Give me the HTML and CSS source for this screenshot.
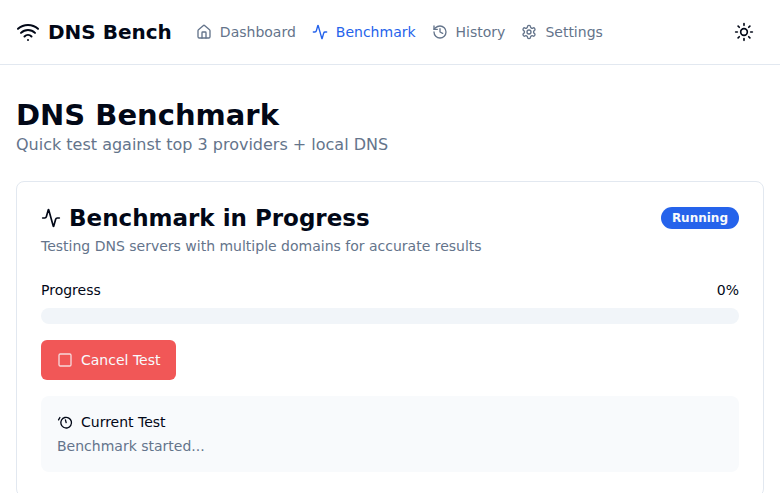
FILE: index.html
```html
<!DOCTYPE html>
<html lang="en">
<head>
<meta charset="utf-8">
<meta name="viewport" content="width=device-width, initial-scale=1">
<title>DNS Bench</title>
<link rel="stylesheet" href="styles.css">
</head>
<body>
<header class="topbar">
  <a class="brand" href="#">
    <svg class="icon icon-lg" viewBox="0 0 24 24" aria-hidden="true"><path d="M12 20h.01"/><path d="M2 8.82a15 15 0 0 1 20 0"/><path d="M5 12.859a10 10 0 0 1 14 0"/><path d="M8.5 16.429a5 5 0 0 1 7 0"/></svg>
    <span>DNS Bench</span>
  </a>
  <nav class="nav">
    <a class="nav-link" href="#">
      <svg class="icon" viewBox="0 0 24 24" aria-hidden="true"><path d="M15 21v-8a1 1 0 0 0-1-1h-4a1 1 0 0 0-1 1v8"/><path d="M3 10a2 2 0 0 1 .709-1.528l7-5.999a2 2 0 0 1 2.582 0l7 5.999A2 2 0 0 1 21 10v9a2 2 0 0 1-2 2H5a2 2 0 0 1-2-2z"/></svg>
      <span>Dashboard</span>
    </a>
    <a class="nav-link active" href="#" aria-current="page">
      <svg class="icon" viewBox="0 0 24 24" aria-hidden="true"><path d="M22 12h-2.48a2 2 0 0 0-1.93 1.46l-2.35 8.36a.25.25 0 0 1-.48 0L9.24 2.18a.25.25 0 0 0-.48 0l-2.35 8.36A2 2 0 0 1 4.49 12H2"/></svg>
      <span>Benchmark</span>
    </a>
    <a class="nav-link" href="#">
      <svg class="icon" viewBox="0 0 24 24" aria-hidden="true"><path d="M3 12a9 9 0 1 0 9-9 9.75 9.75 0 0 0-6.74 2.74L3 8"/><path d="M3 3v5h5"/><path d="M12 7v5l4 2"/></svg>
      <span>History</span>
    </a>
    <a class="nav-link" href="#">
      <svg class="icon" viewBox="0 0 24 24" aria-hidden="true"><path d="M12.22 2h-.44a2 2 0 0 0-2 2v.18a2 2 0 0 1-1 1.73l-.43.25a2 2 0 0 1-2 0l-.15-.08a2 2 0 0 0-2.73.73l-.22.38a2 2 0 0 0 .73 2.73l.15.1a2 2 0 0 1 1 1.72v.51a2 2 0 0 1-1 1.74l-.15.09a2 2 0 0 0-.73 2.73l.22.38a2 2 0 0 0 2.73.73l.15-.08a2 2 0 0 1 2 0l.43.25a2 2 0 0 1 1 1.73V20a2 2 0 0 0 2 2h.44a2 2 0 0 0 2-2v-.18a2 2 0 0 1 1-1.73l.43-.25a2 2 0 0 1 2 0l.15.08a2 2 0 0 0 2.73-.73l.22-.39a2 2 0 0 0-.73-2.73l-.15-.08a2 2 0 0 1-1-1.74v-.5a2 2 0 0 1 1-1.74l.15-.09a2 2 0 0 0 .73-2.73l-.22-.38a2 2 0 0 0-2.73-.73l-.15.08a2 2 0 0 1-2 0l-.43-.25a2 2 0 0 1-1-1.73V4a2 2 0 0 0-2-2z"/><circle cx="12" cy="12" r="3"/></svg>
      <span>Settings</span>
    </a>
  </nav>
  <button class="theme-toggle" type="button" aria-label="Toggle theme">
    <svg class="icon icon-md" viewBox="0 0 24 24" aria-hidden="true"><circle cx="12" cy="12" r="4"/><path d="M12 2v2"/><path d="M12 20v2"/><path d="m4.93 4.93 1.41 1.41"/><path d="m17.66 17.66 1.41 1.41"/><path d="M2 12h2"/><path d="M20 12h2"/><path d="m6.34 17.66-1.41 1.41"/><path d="m19.07 4.93-1.41 1.41"/></svg>
  </button>
</header>
<main class="page">
  <div class="intro">
    <h1>DNS Benchmark</h1>
    <p>Quick test against top 3 providers + local DNS</p>
  </div>
  <section class="card">
    <div class="card-header">
      <div class="card-title">
        <h2>
          <svg class="icon icon-md" viewBox="0 0 24 24" aria-hidden="true"><path d="M22 12h-2.48a2 2 0 0 0-1.93 1.46l-2.35 8.36a.25.25 0 0 1-.48 0L9.24 2.18a.25.25 0 0 0-.48 0l-2.35 8.36A2 2 0 0 1 4.49 12H2"/></svg>
          <span>Benchmark in Progress</span>
        </h2>
        <span class="badge">Running</span>
      </div>
      <p>Testing DNS servers with multiple domains for accurate results</p>
    </div>
    <div class="card-body">
      <div class="progress">
        <div class="progress-label"><span id="progress-name">Progress</span><span>0%</span></div>
        <div class="track" role="progressbar" aria-labelledby="progress-name" aria-valuemin="0" aria-valuemax="100" aria-valuenow="0"></div>
      </div>
      <button class="cancel" type="button">
        <svg class="icon" viewBox="0 0 24 24" aria-hidden="true"><rect width="18" height="18" x="3" y="3" rx="2"/></svg>
        <span>Cancel Test</span>
      </button>
      <div class="current">
        <h3>
          <svg class="icon" viewBox="0 0 24 24" aria-hidden="true"><g transform="rotate(-60 12 12)"><path d="M10 2h4"/><path d="M12 14l3-3"/><circle cx="12" cy="14" r="8"/></g></svg>
          <span>Current Test</span>
        </h3>
        <p>Benchmark started...</p>
      </div>
    </div>
  </section>
</main>
</body>
</html>
```
FILE: styles.css
```css
:root {
  --ink: #020817;
  --muted: #64748b;
  --line: #e2e8f0;
  --blue: #2563eb;
}

* {
  box-sizing: border-box;
}

body {
  margin: 0;
  background: #fff;
  color: var(--ink);
  font: 14px/20px "DejaVu Sans", sans-serif;
  overflow: hidden;
}

h1, h2, h3, p {
  margin: 0;
}

a {
  color: inherit;
  text-decoration: none;
}

button {
  border: 0;
  font: inherit;
  cursor: pointer;
}

.icon {
  width: 16px;
  height: 16px;
  flex: none;
  fill: none;
  stroke: currentColor;
  stroke-width: 2;
  stroke-linecap: round;
  stroke-linejoin: round;
  overflow: visible;
}

.icon-md {
  width: 20px;
  height: 20px;
}

.icon-lg {
  width: 24px;
  height: 24px;
}

.topbar {
  display: flex;
  align-items: center;
  gap: 24px;
  height: 65px;
  padding: 0 16px;
  border-bottom: 1px solid var(--line);
}

.brand {
  display: flex;
  align-items: center;
  gap: 8px;
  font-size: 20px;
  line-height: 28px;
  font-weight: 700;
}

.nav {
  display: flex;
  gap: 16px;
  color: var(--muted);
}

.nav-link {
  display: flex;
  align-items: center;
  gap: 8px;
}

.active {
  color: var(--blue);
}

.theme-toggle {
  display: flex;
  align-items: center;
  justify-content: center;
  width: 40px;
  height: 40px;
  margin-left: auto;
  padding: 0;
  background: none;
  color: inherit;
}

.page {
  display: grid;
  gap: 24px;
  padding: 32px 16px;
}

.intro h1 {
  font-size: 29px;
  line-height: 36px;
}

.intro p {
  color: var(--muted);
  font-size: 16px;
  line-height: 24px;
}

.card {
  border: 1px solid var(--line);
  border-radius: 8px;
}

.card-header {
  display: grid;
  gap: 6px;
  padding: 24px;
}

.card-header p,
.current p {
  color: var(--muted);
}

.card-title {
  display: flex;
  align-items: center;
  justify-content: space-between;
}

.card-title h2 {
  display: flex;
  align-items: center;
  gap: 8px;
  font-size: 23px;
  line-height: 24px;
}

.badge {
  padding: 3px 11px;
  border-radius: 11px;
  background: var(--blue);
  color: #f8fafc;
  font-size: 12px;
  line-height: 16px;
  font-weight: 700;
}

.card-body {
  display: grid;
  gap: 16px;
  padding: 0 24px 24px;
}

.progress {
  display: grid;
  gap: 8px;
}

.progress-label {
  display: flex;
  justify-content: space-between;
}

.track {
  height: 16px;
  border-radius: 8px;
  background: #f1f5f9;
}

.cancel {
  display: flex;
  align-items: center;
  justify-self: start;
  gap: 8px;
  height: 40px;
  padding: 0 16px;
  border-radius: 6px;
  background: #f15757;
  color: #f8fafc;
}

.cancel .icon {
  opacity: 0.8;
}

.current {
  display: grid;
  gap: 4px;
  padding: 16px;
  border-radius: 8px;
  background: #f8fafc;
}

.current h3 {
  display: flex;
  align-items: center;
  gap: 8px;
  font-size: 14px;
  font-weight: 400;
}
```
